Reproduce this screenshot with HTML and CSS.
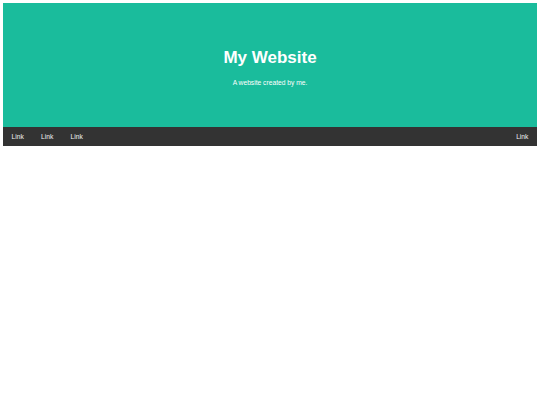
FILE: index.html
```html
<!DOCTYPE html>
<html>
<head>
<meta charset="utf-8">
<link rel="stylesheet" href="styles.css">
</head>
<body>
<div class="header">
  <h1>My Website</h1>
  <p>A website created by me.</p>
</div>
<div class="navbar">
  <a href="#">Link</a>
  <a href="#">Link</a>
  <a href="#">Link</a>
  <a href="#" class="right">Link</a>
</div>
</body>
</html>
```

FILE: styles.css
```css
* { box-sizing: border-box; }
body {
  margin: 3px;
  font-family: "Liberation Sans", Arial, sans-serif;
  background: #fff;
}
.header {
  background: #1abc9c;
  color: #fff;
  text-align: center;
  padding: 45px 0 40px;
  height: 124px;
}
.header h1 {
  margin: 0 0 11px;
  font-size: 17px;
  font-weight: bold;
}
.header p {
  margin: 0;
  font-size: 6.7px;
}
.navbar {
  display: flex;
  background: #333;
  height: 19px;
}
.navbar a {
  color: #f2f2f2;
  text-decoration: none;
  font-size: 6.7px;
  padding: 0 8.6px;
  display: flex;
  align-items: center;
}
.navbar a.right { margin-left: auto; }
```
